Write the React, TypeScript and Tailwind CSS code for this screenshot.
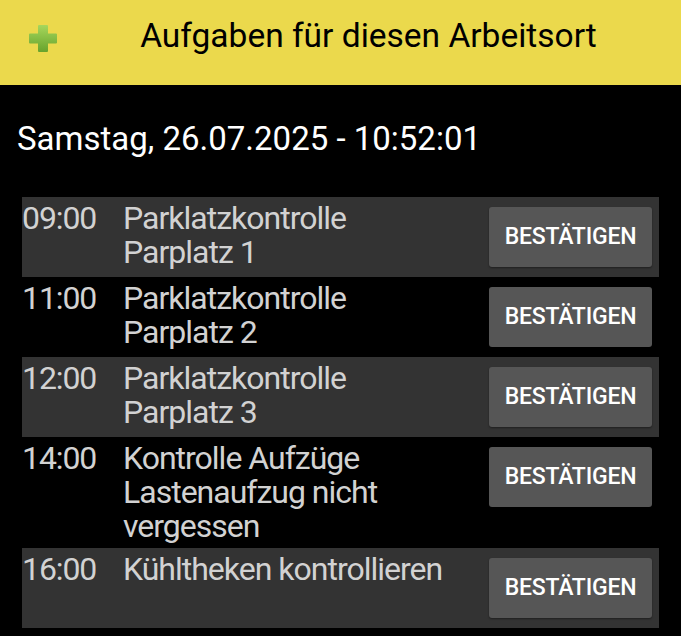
const tasks = [
  { time: "09:00", lines: ["Parklatzkontrolle", "Parplatz 1"] },
  { time: "11:00", lines: ["Parklatzkontrolle", "Parplatz 2"] },
  { time: "12:00", lines: ["Parklatzkontrolle", "Parplatz 3"] },
  { time: "14:00", lines: ["Kontrolle Aufzüge", "Lastenaufzug nicht", "vergessen"] },
  { time: "16:00", lines: ["Kühltheken kontrollieren"] },
];

function PlusIcon() {
  return (
    <svg width="30" height="29" viewBox="0 0 30 29">
      <defs>
        <linearGradient id="g" x1="0" y1="0" x2="0" y2="1">
          <stop offset="0" stopColor="#a6d75c" />
          <stop offset="1" stopColor="#67a32c" />
        </linearGradient>
      </defs>
      <path
        d="M11 1h8a1 1 0 0 1 1 1v7.5h8a1 1 0 0 1 1 1v8a1 1 0 0 1-1 1h-8V27a1 1 0 0 1-1 1h-8a1 1 0 0 1-1-1v-7.5H2a1 1 0 0 1-1-1v-8a1 1 0 0 1 1-1h8V2a1 1 0 0 1 1-1z"
        fill="url(#g)"
      />
    </svg>
  );
}

export default function App() {
  return (
    <div className="min-h-[636px] bg-black" style={{ fontFamily: "Roboto, 'Liberation Sans', sans-serif" }}>
      <header className="flex h-[85px] items-start bg-[#ebd94c]">
        <div className="flex w-[85px] justify-center pt-[24px] pl-[1px]">
          <PlusIcon />
        </div>
        <h1 className="flex-1 pt-[16px] pr-[29px] text-center text-[33.5px] leading-[39px] text-black">
          Aufgaben für diesen Arbeitsort
        </h1>
      </header>

      <div className="px-[17px] pt-[37px] text-[33px] leading-none text-white">Samstag, 26.07.2025 - 10:52:01</div>

      <ul className="mx-[22px] mt-[42px]">
        {tasks.map((t, i) => (
          <li
            key={t.time}
            className={`flex items-start pt-[4px] pb-[5px] ${i % 2 === 0 ? "bg-[#333333]" : "bg-black"}`}
          >
            <div className="w-[101px] text-[32px] leading-[34px] tracking-[-1.1px] text-[#d2d2d2]">{t.time}</div>
            <div className="flex-1 whitespace-pre-line text-[32px] leading-[34px] tracking-[-1px] text-[#d2d2d2]">
              {t.lines.join("\n")}
            </div>
            <button className="mt-[6px] mr-[7px] mb-[5px] h-[60px] w-[163px] shrink-0 rounded-[3px] bg-[#565656] text-[23px] font-medium tracking-[-0.2px] text-white shadow-[0_1px_2px_rgba(0,0,0,0.4)]">
              BESTÄTIGEN
            </button>
          </li>
        ))}
      </ul>
    </div>
  );
}
